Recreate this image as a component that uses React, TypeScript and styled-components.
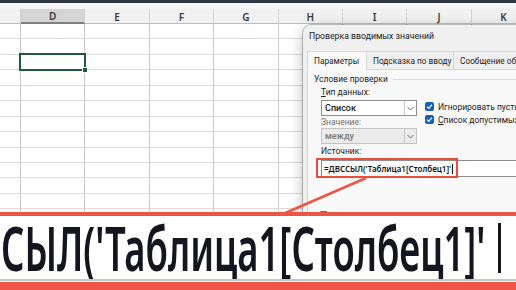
import React from "react";
import styled, { createGlobalStyle } from "styled-components";

const Global = createGlobalStyle`
  html, body { margin: 0; padding: 0; background: #fff; }
  body { font-family: "Noto Sans", "Open Sans", sans-serif; }
  #root { width: 516px; height: 290px; }
`;

const Stage = styled.div`
  position: relative;
  width: 516px;
  height: 290px;
  overflow: hidden;
  background: #fff;
  font-family: "Noto Sans", "Open Sans", sans-serif;
`;

const TopBar = styled.div`
  height: 3px;
  background: #2f3944;
`;

const FormulaStrip = styled.div`
  height: 6px;
  background: #f4f4f4;
`;

const Grid = styled.div`
  display: grid;
  grid-template-columns: 21px repeat(8, 64.4px);
  grid-template-rows: 15px;
  grid-auto-rows: 15.45px;
`;

const HeadCell = styled.div<{ $active?: boolean }>`
  box-sizing: border-box;
  display: flex;
  align-items: center;
  justify-content: center;
  padding-top: 1px;
  background: ${(p) => (p.$active ? "#d4d4d4" : "#f1f1f1")};
  border-right: 1px solid #d2d2d2;
  border-bottom: ${(p) => (p.$active ? "2px solid #7f7f7f" : "1px solid #bdbdbd")};
  font-size: 10px;
  font-weight: 600;
  color: #3a3a3a;
`;

const Cell = styled.div<{ $selected?: boolean }>`
  box-sizing: border-box;
  border-right: 1px solid #c9c9c9;
  border-bottom: 1px solid #dadada;
  ${(p) =>
    p.$selected &&
    `
    position: relative;
    z-index: 1;
    &::after {
      content: "";
      position: absolute;
      left: -2px; top: -2px; right: -2px; bottom: -2px;
      border: 2px solid #22583a;
    }
    &::before {
      content: "";
      position: absolute;
      right: -4px; bottom: -4px;
      width: 4px; height: 4px;
      background: #22583a;
      border: 1px solid #fff;
      z-index: 2;
    }
  `}
`;

const Dialog = styled.div`
  position: absolute;
  left: 303px;
  top: 25px;
  width: 240px;
  height: 280px;
  background: #f0f0f0;
  border-radius: 8px 0 0 0;
  box-shadow: 0 0 0 1px rgba(0, 0, 0, 0.22), 0 4px 14px rgba(0, 0, 0, 0.28);
  color: #1b1b1b;
  font-family: Roboto, "Noto Sans", sans-serif;
  font-size: 8.5px;
`;

const Title = styled.div`
  height: 21px;
  display: flex;
  align-items: center;
  padding-left: 6px;
  font-size: 8.7px;
  white-space: nowrap;
`;

const Tabs = styled.div`
  display: flex;
  margin-top: 5px;
  padding-left: 4px;
  height: 19px;
  position: relative;
  z-index: 1;
  margin-bottom: -1px;
`;

const Tab = styled.div<{ $active?: boolean; $w: number }>`
  box-sizing: border-box;
  width: ${(p) => p.$w}px;
  flex: none;
  height: 19px;
  padding-left: 6px;
  line-height: 18px;
  font-size: 8.3px;
  white-space: nowrap;
  overflow: hidden;
  border: 1px solid #d6d6d6;
  border-bottom: ${(p) => (p.$active ? "1px solid #f9f9f9" : "1px solid #d6d6d6")};
  margin-right: -1px;
  background: ${(p) => (p.$active ? "#f9f9f9" : "#f0f0f0")};
`;

const Panel = styled.div`
  margin-left: 4px;
  height: 240px;
  background: #f9f9f9;
  border-top: 1px solid #d6d6d6;
  border-left: 1px solid #d6d6d6;
  padding: 2px 0 0 6px;
`;

const Legend = styled.div`
  display: flex;
  align-items: center;
  gap: 5px;
  height: 14px;
  font-size: 8.5px;
  white-space: nowrap;
`;

const Rule = styled.div`
  flex: 1;
  border-top: 1px solid #dcdcdc;
`;

const Body = styled.div`
  display: flex;
  padding-left: 7px;
`;

const LeftCol = styled.div`
  width: 96px;
  flex: none;
  display: flex;
  flex-direction: column;
`;

const RightCol = styled.div`
  margin-left: 8px;
  padding-top: 14px;
  display: flex;
  flex-direction: column;
`;

const Label = styled.div<{ $muted?: boolean; $h: number }>`
  height: ${(p) => p.$h}px;
  line-height: ${(p) => p.$h}px;
  color: ${(p) => (p.$muted ? "#6e6e6e" : "#1b1b1b")};
  white-space: nowrap;
`;

const Select = styled.div<{ $disabled?: boolean }>`
  box-sizing: border-box;
  height: 16px;
  display: flex;
  border: 1px solid ${(p) => (p.$disabled ? "#c4c4c4" : "#8d8d8d")};
  background: ${(p) => (p.$disabled ? "#ebebeb" : "#fff")};
  color: ${(p) => (p.$disabled ? "#7a7a7a" : "#1b1b1b")};
  margin-top: ${(p) => (p.$disabled ? 0 : 1)}px;
`;

const SelectText = styled.div`
  flex: 1;
  padding-left: 3px;
  line-height: 14px;
  font-size: 9px;
  font-weight: 500;
`;

const Chevron = styled.div`
  width: 11px;
  border-left: 1px solid #c8c8c8;
  display: flex;
  align-items: center;
  justify-content: center;
`;

const CheckRow = styled.div`
  display: flex;
  align-items: center;
  gap: 4px;
  height: 13px;
  white-space: nowrap;
`;

const Box = styled.div<{ $checked?: boolean }>`
  box-sizing: border-box;
  width: 9px;
  height: 9px;
  border-radius: 2px;
  flex: none;
  display: flex;
  align-items: center;
  justify-content: center;
  background: ${(p) => (p.$checked ? "#1660bb" : "#fff")};
  border: 1px solid ${(p) => (p.$checked ? "#1660bb" : "#6a6a6a")};
`;

const SourceBlock = styled.div`
  padding-left: 7px;
`;

const Input = styled.div`
  position: relative;
  box-sizing: border-box;
  margin-top: 1px;
  height: 17px;
  width: 300px;
  border: 1px solid #8d8d8d;
  background: #fff;
  display: flex;
  align-items: center;
  padding-left: 2px;
  font-family: "Noto Sans", sans-serif;
  font-size: 8px;
  font-weight: 600;
  color: #141414;
  white-space: nowrap;
`;

const SmallCaret = styled.span`
  display: inline-block;
  width: 1px;
  height: 10px;
  margin-left: 1px;
  background: #111;
`;

const Highlight = styled.div`
  position: absolute;
  left: -6px;
  top: -3px;
  width: 142px;
  height: 20px;
  box-sizing: border-box;
  border: 2.5px solid #ea4f3c;
`;

const SpreadRow = styled(CheckRow)`
  margin-top: 32px;
  margin-left: -2px;
`;

const Connector = styled.svg`
  position: absolute;
  left: 0;
  top: 0;
  pointer-events: none;
`;

const Callout = styled.div`
  position: absolute;
  left: 0;
  top: 212px;
  width: 516px;
  height: 78px;
  background: #fff;
  border-top: 4px solid #ee5442;
  box-sizing: border-box;
  display: flex;
  flex-direction: column;
`;

const BigLine = styled.div`
  height: 63px;
  overflow: hidden;
  display: flex;
  align-items: flex-end;
  padding-left: 1px;
  white-space: nowrap;
`;

const BigText = styled.span`
  display: inline-block;
  font-size: 36.5px;
  font-weight: 600;
  line-height: 36px;
  color: #15151f;
  transform-origin: 0 100%;
  transform: translateY(-1px) scaleY(1.66);
  filter: blur(0.4px);
`;

const BigCaret = styled.span`
  display: inline-block;
  width: 3px;
  height: 50px;
  margin-left: 13px;
  margin-bottom: 6px;
  background: #15151f;
  filter: blur(0.4px);
`;

const Divider = styled.div`
  height: 2px;
  background: #c6c6c6;
`;

const Band = styled.div`
  flex: 1;
  margin-top: 1px;
  background: #ef5646;
`;

const Tick = () => (
  <svg width="7" height="7" viewBox="0 0 7 7">
    <path d="M1 3.6 L2.8 5.3 L6 1.6" fill="none" stroke="#fff" strokeWidth="1.2" />
  </svg>
);

const Down = () => (
  <svg width="7" height="5" viewBox="0 0 7 5">
    <path d="M0.5 1 L3.5 4 L6.5 1" fill="none" stroke="#5a5a5a" strokeWidth="0.9" />
  </svg>
);

const cols = ["", "D", "E", "F", "G", "H", "I", "J", "K"];
const ROWS = 18;

export default function App() {
  return (
    <Stage>
      <Global />
      <TopBar />
      <FormulaStrip />
      <Grid>
        {cols.map((c, i) => (
          <HeadCell key={"h" + i} $active={c === "D"}>
            {c}
          </HeadCell>
        ))}
        {Array.from({ length: ROWS }).map((_, r) =>
          cols.map((c, i) => (
            <Cell key={r + "-" + i} $selected={r === 2 && c === "D"} />
          ))
        )}
      </Grid>

      <Dialog>
        <Title>Проверка вводимых значений</Title>
        <Tabs>
          <Tab $active $w={60}>Параметры</Tab>
          <Tab $w={88}>Подсказка по вводу</Tab>
          <Tab $w={110}>Сообщение об ошибке</Tab>
        </Tabs>
        <Panel>
          <Legend>
            Условие проверки
            <Rule />
          </Legend>
          <Body>
            <LeftCol>
              <Label $h={13}>
                <u>Т</u>ип данных:
              </Label>
              <Select>
                <SelectText>Список</SelectText>
                <Chevron>
                  <Down />
                </Chevron>
              </Select>
              <Label $h={12} $muted>
                Значение:
              </Label>
              <Select $disabled>
                <SelectText>между</SelectText>
                <Chevron>
                  <Down />
                </Chevron>
              </Select>
            </LeftCol>
            <RightCol>
              <CheckRow>
                <Box $checked>
                  <Tick />
                </Box>
                Игнорировать пустые ячейки
              </CheckRow>
              <CheckRow>
                <Box $checked>
                  <Tick />
                </Box>
                <span>
                  <u>С</u>писок допустимых значений
                </span>
              </CheckRow>
            </RightCol>
          </Body>
          <SourceBlock>
            <Label $h={15}>Источник:</Label>
            <Input>
              =ДВССЫЛ('Таблица1[Столбец1]'
              <SmallCaret />
              <Highlight />
            </Input>
            <SpreadRow>
              <Box />
            </SpreadRow>
          </SourceBlock>
        </Panel>
      </Dialog>

      <Connector width="516" height="290" viewBox="0 0 516 290">
        <line x1="366" y1="178" x2="283" y2="214" stroke="#ec5644" strokeWidth="2.6" />
      </Connector>

      <Callout>
        <BigLine>
          <BigText>СЫЛ('Таблица1[Столбец1]'</BigText>
          <BigCaret />
        </BigLine>
        <Divider />
        <Band />
      </Callout>
    </Stage>
  );
}
